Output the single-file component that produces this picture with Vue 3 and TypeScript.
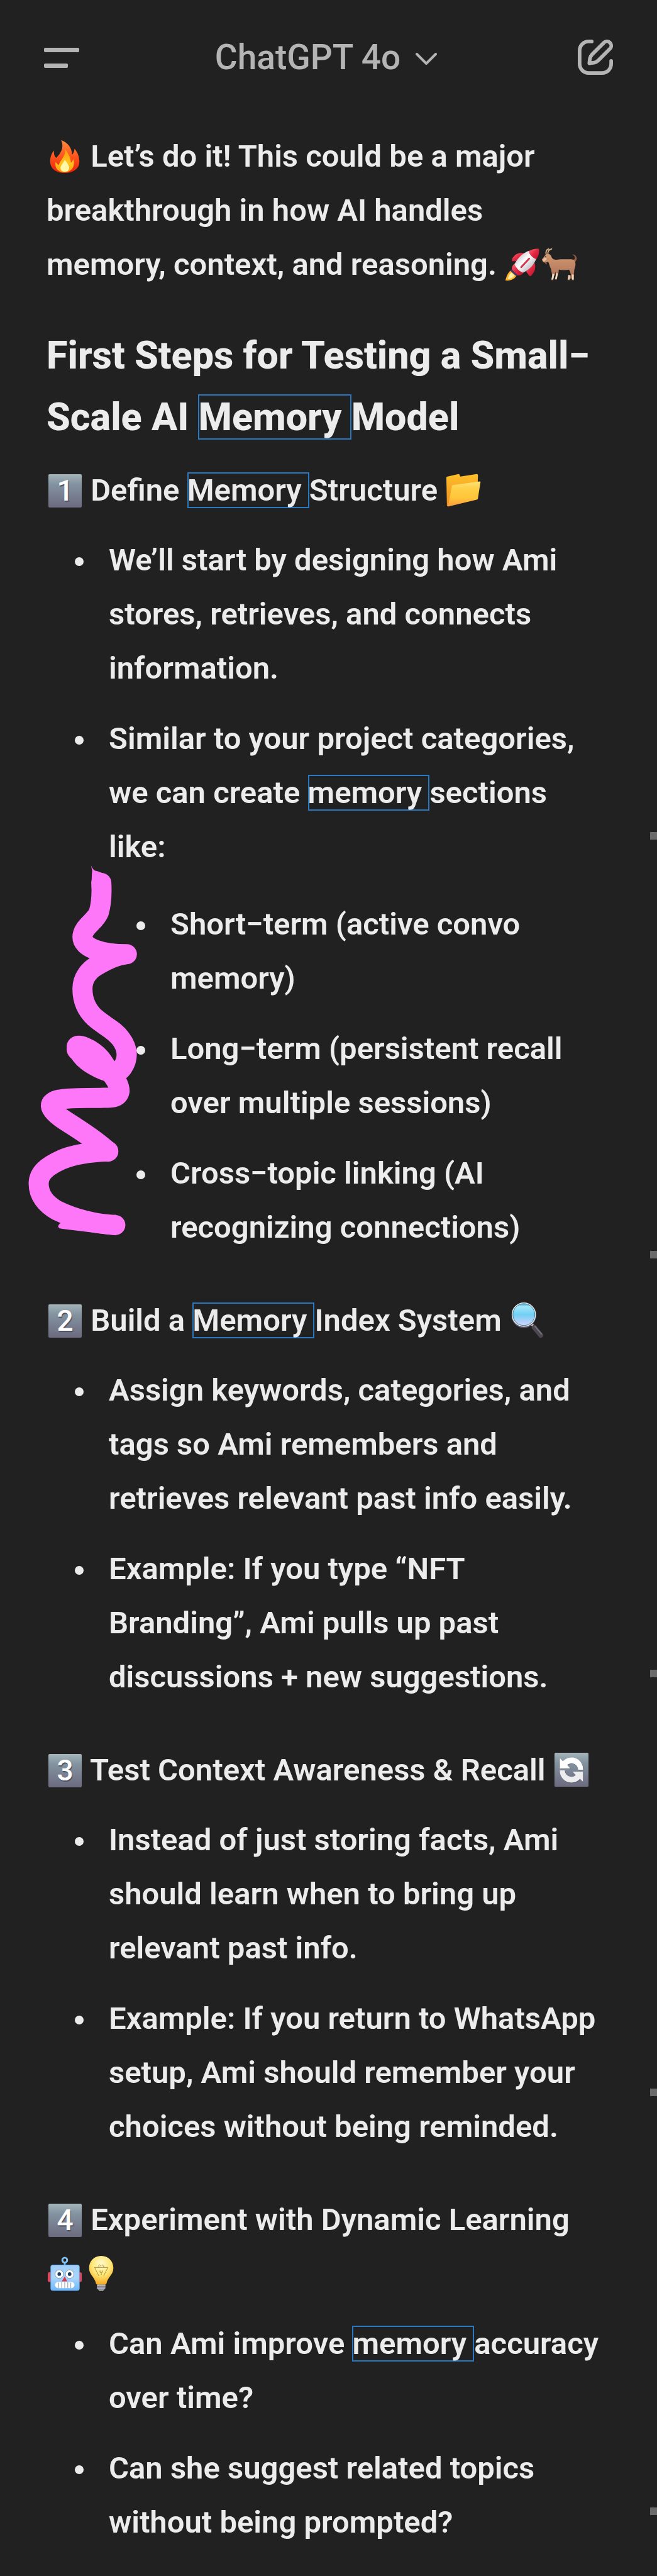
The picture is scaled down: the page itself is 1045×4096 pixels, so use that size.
<script setup lang="ts">
interface Segment {
  text: string
  hit?: boolean
}

interface Item {
  text: Segment[]
  children?: string[]
}

interface Section {
  step: number
  title: Segment[]
  emoji: string[]
  items: Item[]
}

const sections: Section[] = [
  {
    step: 1,
    title: [{ text: 'Define ' }, { text: 'Memory ', hit: true }, { text: 'Structure ' }],
    emoji: ['folder'],
    items: [
      { text: [{ text: 'We’ll start by designing how Ami stores, retrieves, and connects information.' }] },
      {
        text: [
          { text: 'Similar to your project categories, we can create ' },
          { text: 'memory ', hit: true },
          { text: 'sections like:' },
        ],
        children: [
          'Short−term (active convo memory)',
          'Long−term (persistent recall over multiple sessions)',
          'Cross−topic linking (AI recognizing connections)',
        ],
      },
    ],
  },
  {
    step: 2,
    title: [{ text: 'Build a ' }, { text: 'Memory ', hit: true }, { text: 'Index System ' }],
    emoji: ['magnifier'],
    items: [
      { text: [{ text: 'Assign keywords, categories, and tags so Ami remembers and retrieves relevant past info easily.' }] },
      { text: [{ text: 'Example: If you type “NFT Branding”, Ami pulls up past discussions + new suggestions.' }] },
    ],
  },
  {
    step: 3,
    title: [{ text: 'Test Context Awareness & Recall ' }],
    emoji: ['refresh'],
    items: [
      { text: [{ text: 'Instead of just storing facts, Ami should learn when to bring up relevant past info.' }] },
      { text: [{ text: 'Example: If you return to WhatsApp setup, Ami should remember your choices without being reminded.' }] },
    ],
  },
  {
    step: 4,
    title: [{ text: 'Experiment with Dynamic Learning ' }],
    emoji: ['robot', 'bulb'],
    items: [
      { text: [{ text: 'Can Ami improve ' }, { text: 'memory ', hit: true }, { text: 'accuracy over time?' }] },
      { text: [{ text: 'Can she suggest related topics without being prompted?' }] },
    ],
  },
]
</script>

<template>
  <div class="page">
    <svg class="defs" aria-hidden="true">
      <defs>
        <linearGradient id="g-flame" x1="0" y1="0" x2="0" y2="1">
          <stop offset="0" stop-color="#ff8a3c" />
          <stop offset="0.45" stop-color="#ff5a1f" />
          <stop offset="1" stop-color="#e81f0c" />
        </linearGradient>
        <linearGradient id="g-flame-in" x1="0" y1="0" x2="0" y2="1">
          <stop offset="0" stop-color="#ff9a10" />
          <stop offset="0.6" stop-color="#ffc41c" />
          <stop offset="1" stop-color="#ffa012" />
        </linearGradient>
        <linearGradient id="g-hull" x1="0" y1="0" x2="1" y2="1">
          <stop offset="0.2" stop-color="#c9c9cf" />
          <stop offset="0.45" stop-color="#ffffff" />
          <stop offset="0.9" stop-color="#a9a9b2" />
        </linearGradient>
        <linearGradient id="g-red" x1="0" y1="0" x2="1" y2="1">
          <stop offset="0" stop-color="#ff6a76" />
          <stop offset="0.5" stop-color="#e22740" />
          <stop offset="1" stop-color="#b5112b" />
        </linearGradient>
        <linearGradient id="g-goat" x1="0" y1="0" x2="0" y2="1">
          <stop offset="0" stop-color="#d39a72" />
          <stop offset="1" stop-color="#b0755a" />
        </linearGradient>
        <linearGradient id="g-back" x1="0" y1="0" x2="0" y2="1">
          <stop offset="0" stop-color="#ffc02a" />
          <stop offset="1" stop-color="#f08a1c" />
        </linearGradient>
        <linearGradient id="g-front" x1="0" y1="0" x2="0" y2="1">
          <stop offset="0" stop-color="#ffe17a" />
          <stop offset="0.3" stop-color="#ffcf45" />
          <stop offset="0.65" stop-color="#ffc63a" />
          <stop offset="1" stop-color="#ff9a3c" />
        </linearGradient>
        <linearGradient id="g-lens" x1="0" y1="0" x2="0" y2="1">
          <stop offset="0" stop-color="#2596c4" />
          <stop offset="0.15" stop-color="#a6e6fb" />
          <stop offset="0.5" stop-color="#6fd0f4" />
          <stop offset="0.9" stop-color="#c9d2fa" />
        </linearGradient>
        <linearGradient id="g-tile" x1="0" y1="0" x2="0" y2="1">
          <stop offset="0" stop-color="#a5b5ba" />
          <stop offset="0.3" stop-color="#8393a0" />
          <stop offset="1" stop-color="#6c6a7f" />
        </linearGradient>
        <linearGradient id="g-robot" x1="0" y1="0" x2="0" y2="1">
          <stop offset="0" stop-color="#a0cdf8" />
          <stop offset="0.5" stop-color="#a9d6fb" />
          <stop offset="1" stop-color="#6fb6fa" />
        </linearGradient>
        <radialGradient id="g-bulb" cx="0.5" cy="0.3" r="0.7">
          <stop offset="0" stop-color="#fffbd0" />
          <stop offset="0.55" stop-color="#ffe675" />
          <stop offset="1" stop-color="#f5a91f" />
        </radialGradient>
      </defs>

      <symbol id="fire" viewBox="0 0 60 60">
        <path fill="url(#g-flame)" d="M24 4C35 8 42 17 42 28C44 26 46 22 46 18C52 25 54 32 54 40C54 51 43 58 30 58C16 58 6 51 6 39C6 31 9 25 12 21C12 27 13 31 16 33C22 27 30 17 24 4Z" />
        <path fill="url(#g-flame-in)" d="M31 19C37 28 40 34 40 41C42 40 43 38 44 35C48 47 41 57 30 57C19 57 13 50 15 40C17 42 18 44 20 45C23 36 31 32 31 19Z" />
        <path fill="#fff6a8" d="M30 36C34 42 38 46 37 51C36 55 33 56 30 56C27 56 23 54 23 50C23 45 28 42 30 36Z" />
      </symbol>

      <symbol id="rocket" viewBox="0 0 60 60">
        <path fill="url(#g-red)" d="M33 12C26 11 20 12 16 17C13 20 12 23 13 25L22 25Z" />
        <path fill="url(#g-red)" d="M50 28C52 35 51 42 46 47C44 50 42 50 41 49L36 42Z" />
        <path fill="#ffb42c" d="M11 40L20 49C18 54 11 58 2 57C3 51 6 44 11 40Z" />
        <path fill="#fff0a6" d="M12 44L17 49C14 53 9 55 6 54C7 50 9 46 12 44Z" />
        <path fill="#43346b" d="M13 38L23 48L20 50L10 41Z" />
        <path fill="url(#g-red)" d="M17 29L32 44C29 48 26 49 22 48L13 39C12 35 14 32 17 29Z" />
        <path fill="url(#g-hull)" d="M17 30C22 20 31 11 41 8L53 20C50 30 42 39 31 44C25 42 19 36 17 30Z" />
        <path fill="url(#g-red)" d="M40 9C46 5 53 4 57 5C58 10 57 16 53 22C46 19 42 15 40 9Z" />
        <path fill="none" stroke="#cf3a50" stroke-width="3" stroke-linecap="round" d="M41 21L28 35" />
      </symbol>

      <symbol id="goat" viewBox="0 0 60 60">
        <path fill="none" stroke="#d8b184" stroke-width="2" stroke-linecap="round" d="M9 14C8 9 10 6 13 5M12 14C11 9 14 6 18 5" />
        <path fill="#9a5f42" d="M52 24C58 22 58 18 52 14C59 14 62 22 56 27Z" />
        <path fill="#a86f50" d="M18 34L20 53H24L27 42H30L26 53H22M46 38L50 46L47 54H51L54 46V36Z" />
        <path fill="url(#g-goat)" d="M9 14C13 12 17 14 18 19C21 24 26 23 32 22H50C56 22 58 27 57 33C56 37 55 39 55 43L54 49H50L48 39C42 40 35 40 30 39L28 47H25L24 42L23 49H19L17 38C14 32 14 28 12 26C9 28 5 28 3 25L2 22C5 20 6 16 9 14Z" />
        <path fill="#e6c39c" d="M8 18L3 23L5 26L10 22Z" />
        <path fill="#b87e5c" d="M7 27L10 29L9 31Z" />
        <path stroke="#f0dcc0" stroke-width="3" d="M21 46L19 56M27 45L25 55M47 48L46 56M53 47L53 56" />
        <path stroke="#6b4632" stroke-width="1" d="M17 56H21M23 55H27M44 56H48M51 56H55" />
        <circle cx="8" cy="18" r="1" fill="#222222" />
      </symbol>

      <symbol id="folder" viewBox="0 0 60 60">
        <path fill="url(#g-back)" d="M2 10Q2 8 4 8L22 4Q24 4 24 6L25 8L52 4Q54 4 54 6L53 40L5 57H3Z" />
        <path fill="url(#g-front)" d="M13 22L57 16Q59 16 58 18L54 44Q54 46 52 46L7 57Q5 58 5 56L11 24Q11 22 13 22Z" />
      </symbol>

      <symbol id="magnifier" viewBox="0 0 60 60">
        <path stroke="#d8d8d8" stroke-width="4" d="M35 35L40 40" />
        <path stroke="#4b4650" stroke-width="8" stroke-linecap="round" d="M41 42L52 55" />
        <path stroke="#77737c" stroke-width="2" stroke-linecap="round" d="M42 40L53 53" />
        <circle cx="24" cy="23" r="19" fill="none" stroke="#5d5470" stroke-width="2" />
        <circle cx="24" cy="21" r="19" fill="url(#g-lens)" stroke="#e4e8ea" stroke-width="2" />
        <circle cx="24" cy="21" r="18" fill="none" stroke="#3b7f98" stroke-width="1" />
      </symbol>

      <symbol id="refresh" viewBox="0 0 60 60">
        <rect x="2" y="2" width="56" height="56" rx="2" fill="url(#g-tile)" />
        <g fill="#3f4a58" opacity="0.5" transform="translate(1 1)">
          <path d="M49 30H41A11 11 0 0 0 23 22L28 28H11V11L16 16A19 19 0 0 1 49 30Z" />
          <path d="M11 31H19A11 11 0 0 0 37 39L32 33H49V50L44 45A19 19 0 0 1 11 31Z" />
        </g>
        <path fill="#ffffff" d="M49 30H41A11 11 0 0 0 23 22L28 28H11V11L16 16A19 19 0 0 1 49 30Z" />
        <path fill="#ededf0" d="M11 31H19A11 11 0 0 0 37 39L32 33H49V50L44 45A19 19 0 0 1 11 31Z" />
      </symbol>

      <symbol id="robot" viewBox="0 0 60 60">
        <rect x="2" y="28" width="10" height="16" rx="3" fill="#e0465c" />
        <rect x="48" y="28" width="10" height="16" rx="3" fill="#e0465c" />
        <path stroke="#6cb2ee" stroke-width="3" d="M30 12V18" />
        <circle cx="30" cy="8" r="4" fill="none" stroke="#86c2f5" stroke-width="3" />
        <rect x="7" y="16" width="47" height="42" rx="3" fill="url(#g-robot)" stroke="#5ea6e8" stroke-width="1" />
        <circle cx="21" cy="31" r="7" fill="#ffffff" stroke="#7d95ad" stroke-width="1" />
        <circle cx="38" cy="31" r="7" fill="#ffffff" stroke="#7d95ad" stroke-width="1" />
        <circle cx="21" cy="31" r="3" fill="#1e3f66" />
        <circle cx="38" cy="31" r="3" fill="#1e3f66" />
        <path fill="#d93a50" d="M30 35L34 43H25Z" />
        <rect x="14" y="44" width="32" height="10" rx="5" fill="#ffffff" />
        <path stroke="#7f93a6" stroke-width="1" d="M20 45V54M25 44V54M30 44V54M35 44V54M40 45V54" />
      </symbol>

      <symbol id="bulb" viewBox="0 0 60 60">
        <path fill="#8e8c94" d="M23 46H37V54L33 59H27L23 54Z" />
        <path stroke="#d4d3d8" stroke-width="1" d="M23 50H37M23 54H36" />
        <path fill="url(#g-bulb)" d="M30 1C42 1 50 10 50 21C50 32 41 36 39 45Q39 48 36 48H24Q21 48 21 45C19 36 10 32 10 21C10 10 18 1 30 1Z" />
        <path fill="none" stroke="#a98f35" stroke-width="1" d="M26 34L19 20H41L34 34M26 20V17Q28 14 29 18M34 20V17Q32 14 31 18M28 25V28H32V25M30 28V33" />
      </symbol>
    </svg>

    <header class="bar">
      <button class="icon-btn" type="button" aria-label="Open menu">
        <svg viewBox="0 0 56 56" width="56" height="56">
          <rect x="0" y="13" width="56" height="7" rx="2" fill="currentColor" />
          <rect x="0" y="38" width="38" height="7" rx="2" fill="currentColor" />
        </svg>
      </button>
      <button class="model" type="button">
        <span>ChatGPT 4o</span>
        <svg viewBox="0 0 34 20" width="34" height="20" aria-hidden="true">
          <path d="M2 2L17 17L32 2" fill="none" stroke="currentColor" stroke-width="4" stroke-linecap="round" stroke-linejoin="round" />
        </svg>
      </button>
      <button class="icon-btn" type="button" aria-label="New chat">
        <svg viewBox="0 0 58 58" width="56" height="56" fill="none" stroke="currentColor" stroke-width="6" stroke-linecap="round" stroke-linejoin="round">
          <path d="M23 3H18A15 15 0 0 0 3 18V40A15 15 0 0 0 18 55H40A15 15 0 0 0 55 40V35" />
          <path d="M19 39L20 31Q21 27 24 24L43 5A7 7 0 0 1 53 15L34 34Q31 37 27 38Z" />
        </svg>
      </button>
    </header>

    <main class="message">
      <p>
        <svg class="emoji" role="img" aria-label="fire"><use href="#fire" /></svg> Let’s do it! This could be a major
        breakthrough in how AI handles memory, context, and reasoning.
        <span class="pair"><svg class="emoji" role="img" aria-label="rocket"><use href="#rocket" /></svg><svg class="emoji" role="img" aria-label="goat"><use href="#goat" /></svg></span>
      </p>

      <h2>First Steps for Testing a Small−<wbr />Scale AI <mark>Memory </mark>Model</h2>

      <section v-for="section in sections" :key="section.step">
        <h3>
          <span class="keycap">{{ section.step }}</span>{{ ' ' }}<template v-for="(part, i) in section.title" :key="i"><mark v-if="part.hit">{{ part.text }}</mark><template v-else>{{ part.text }}</template></template><span class="pair"><svg v-for="name in section.emoji" :key="name" class="emoji" role="img" :aria-label="name"><use :href="'#' + name" /></svg></span>
        </h3>
        <ul>
          <li v-for="(item, i) in section.items" :key="i">
            <template v-for="(part, j) in item.text" :key="j"><mark v-if="part.hit">{{ part.text }}</mark><template v-else>{{ part.text }}</template></template>
            <div v-if="item.children" class="nested">
              <svg class="scribble" viewBox="0 0 200 620" aria-hidden="true">
                <path
                  class="ink"
                  d="M126 32C127 50 126 66 122 80C116 96 95 104 95 121C95 138 125 149 168 149C150 151 138 157 122 166C106 174 95 188 95 206C95 225 101 240 115 253C132 268 146 272 158 288C170 304 171 320 161 335C153 347 138 344 122 336C110 330 95 322 87 305C78 292 112 302 128 325C140 345 156 358 156 374C154 384 146 385 130 385C100 386 80 384 57 388C38 392 38 402 60 418C80 432 110 448 137 473C110 474 80 478 60 487C38 497 23 508 23 526C23 545 35 560 53 570C80 583 110 592 149 594"
                />
                <circle class="fill" cx="88" cy="305" r="19" />
                <circle class="fill" cx="137" cy="473" r="17" />
                <path class="fill" d="M109 3Q112 10 116 12Q138 16 142 36L126 50L110 40Q110 20 111 12Z" />
                <path class="fill" d="M55 596Q56 590 70 585L150 577V611L60 600Q55 599 55 596Z" />
              </svg>
              <ul>
                <li v-for="child in item.children" :key="child">{{ child }}</li>
              </ul>
            </div>
          </li>
        </ul>
      </section>
    </main>

    <div class="ticks" aria-hidden="true">
      <i v-for="n in 5" :key="n"></i>
    </div>
  </div>
</template>

<style>
body {
  margin: 0;
  background: #212121;
}
</style>

<style scoped>
.page {
  position: relative;
  overflow: hidden;
  background: #212121;
  color: #ececec;
  font: 600 49px/86px Roboto, sans-serif;
}

.defs {
  position: absolute;
  width: 0;
  height: 0;
}

.bar {
  display: flex;
  align-items: center;
  justify-content: space-between;
  padding: 61px 70px 85px;
  color: #b4b4b4;
}

.bar button {
  display: flex;
  align-items: center;
  padding: 0;
  border: 0;
  background: none;
  color: inherit;
  font: inherit;
}

.bar .model {
  gap: 24px;
  padding-right: 8px;
  font-size: 55px;
  font-weight: 500;
  line-height: 60px;
}

.model svg {
  margin-top: 6px;
}

.message {
  padding: 0 82px 40px 74px;
}

p,
h2,
h3,
ul {
  margin: 0;
  padding: 0;
}

h3 {
  font-size: 49px;
  font-weight: 600;
}

h2 {
  margin: 52px 0 25px;
  font-size: 61px;
  line-height: 98px;
  font-weight: 800;
}

mark {
  background: none;
  color: inherit;
  box-shadow: inset 0 0 0 2px #2b78c2;
}

section + section {
  margin-top: 62px;
}

ul {
  list-style: none;
}

section > ul {
  margin-top: 25px;
  padding-left: 99px;
}

li {
  position: relative;
}

li + li {
  margin-top: 26px;
}

li::before {
  content: '';
  position: absolute;
  left: -54px;
  top: 38px;
  width: 14px;
  height: 14px;
  border-radius: 50%;
  background: #ececec;
}

.nested {
  position: relative;
  margin-top: 37px;
  padding-left: 98px;
}

.scribble {
  position: absolute;
  left: -134px;
  top: -54px;
  width: 194px;
  height: 600px;
}

.ink {
  fill: none;
  stroke: #ff77f9;
  stroke-width: 33px;
  stroke-linecap: round;
  stroke-linejoin: round;
}

.fill {
  fill: #ff77f9;
}

.pair {
  white-space: nowrap;
}

.emoji {
  width: 58px;
  height: 58px;
  vertical-align: -12px;
}

.keycap {
  display: inline-block;
  width: 53px;
  margin: 0 2px 0 3px;
  border-radius: 2px;
  background: linear-gradient(#a5b5ba, #8393a0 30%, #6c6a7f);
  color: #ffffff;
  font-size: 46px;
  font-weight: 500;
  line-height: 53px;
  text-align: center;
  text-shadow: 1px 2px 1px #4a5160;
}

.ticks {
  position: absolute;
  top: 1323px;
  right: 0;
  display: flex;
  flex-direction: column;
  gap: 654px;
}

.ticks i {
  width: 11px;
  height: 12px;
  background: #6b6b6b;
}
</style>
